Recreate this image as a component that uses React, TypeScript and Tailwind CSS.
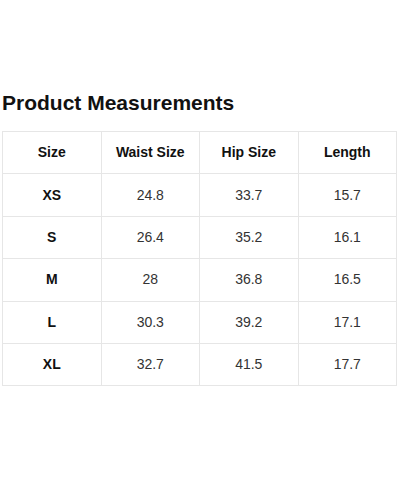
import React from 'react';

const rows = [
    { size: 'XS', waist: '24.8', hip: '33.7', length: '15.7' },
    { size: 'S', waist: '26.4', hip: '35.2', length: '16.1' },
    { size: 'M', waist: '28', hip: '36.8', length: '16.5' },
    { size: 'L', waist: '30.3', hip: '39.2', length: '17.1' },
    { size: 'XL', waist: '32.7', hip: '41.5', length: '17.7' },
];

export default function App() {
    return (
        <div className="h-[480px] w-[400px] bg-white pl-[2px] pr-[3px] pt-[91px] font-['Liberation_Sans',Arial,sans-serif]">
            <h2 className="text-[21px] font-bold leading-[24px] text-[#111]">Product Measurements</h2>
            <table className="mt-[16px] w-full table-fixed border-collapse text-[14px]">
                <thead>
                    <tr className="h-[42.4px]">
                        {['Size', 'Waist Size', 'Hip Size', 'Length'].map((h) => (
                            <th key={h} className="border border-[#e6e6e6] text-center font-bold text-[#111]">
                                {h}
                            </th>
                        ))}
                    </tr>
                </thead>
                <tbody>
                    {rows.map((r) => (
                        <tr key={r.size} className="h-[42.4px]">
                            <td className="border border-[#e6e6e6] text-center font-bold text-[#111]">{r.size}</td>
                            <td className="border border-[#e6e6e6] text-center text-[#333]">{r.waist}</td>
                            <td className="border border-[#e6e6e6] text-center text-[#333]">{r.hip}</td>
                            <td className="border border-[#e6e6e6] text-center text-[#333]">{r.length}</td>
                        </tr>
                    ))}
                </tbody>
            </table>
        </div>
    );
}
